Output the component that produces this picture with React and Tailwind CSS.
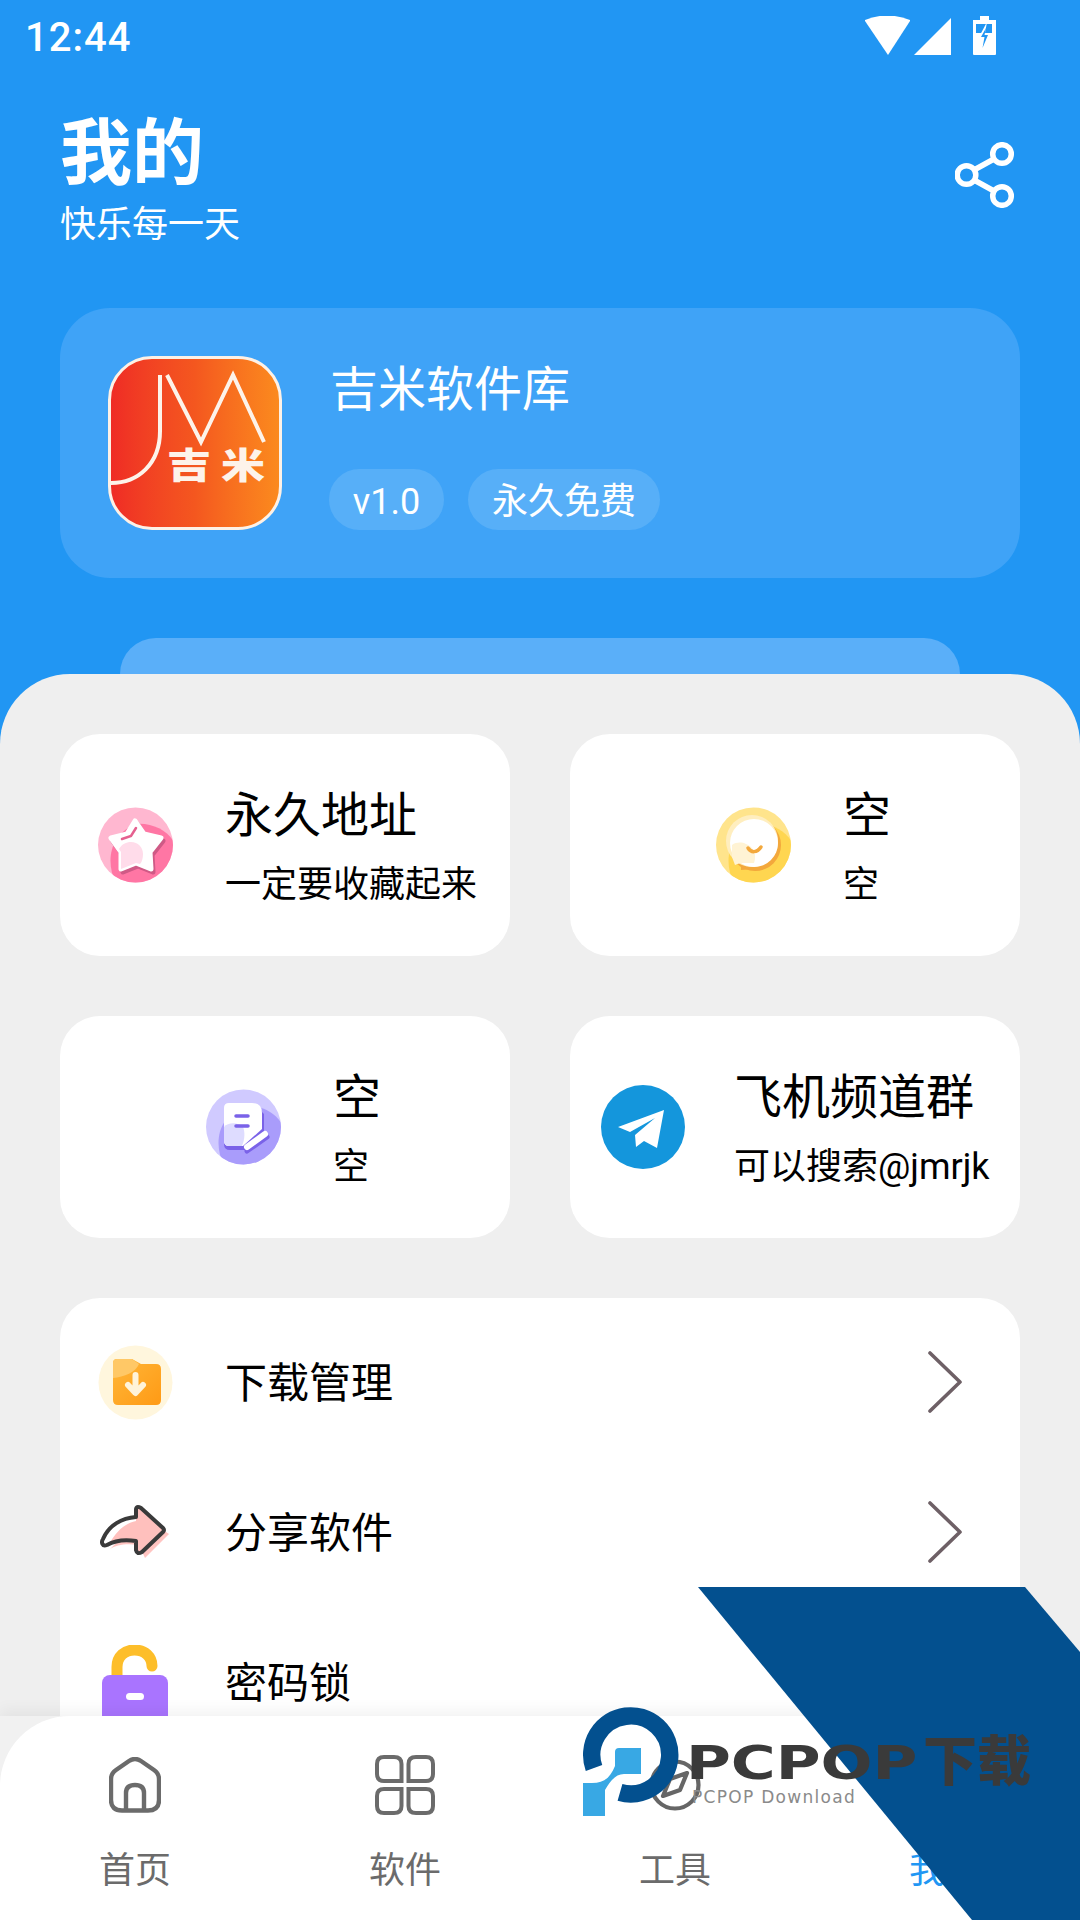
import { useState } from "react";

const gridCards = [
  { title: "永久地址", sub: "一定要收藏起来", icon: "star", pad: "pl-[38px]" },
  { title: "空", sub: "空", icon: "chat", pad: "pl-[146px]" },
  { title: "空", sub: "空", icon: "note", pad: "pl-[146px]" },
  { title: "飞机频道群", sub: "可以搜索@jmrjk", icon: "plane", pad: "pl-[31px]" },
];

const listRows = [
  { title: "下载管理", icon: "folder", arrow: true },
  { title: "分享软件", icon: "share", arrow: true },
  { title: "密码锁", icon: "lock", arrow: false },
];

const navItems = [
  { label: "首页", icon: "home" },
  { label: "软件", icon: "grid" },
  { label: "工具", icon: "compass" },
  { label: "我的", icon: "none", active: true },
];

function StatusIcons() {
  return (
    <svg width="132" height="40" viewBox="0 0 132 40" fill="#fff">
      <path d="M0 4 Q22 -5 45 4 L45 5 L23 39 L0 5Z" />
      <path d="M49 39 L86 2 V39Z" />
      <path d="M115 0 H124 V4 H131 V38 Q131 39 130 39 H109 Q108 39 108 38 V4 H115Z" />
      <path d="M111 8 H127 V17 H111Z" fill="#2196f3" />
      <path d="M122 6 L114 21 H118 L116 36 L125 17 H120 L122 6Z" fill="#fff" />
      <path d="M121 12 L116 21 H119.5 L117.5 32 L123 19 H119.5Z" fill="#2196f3" />
    </svg>
  );
}

function ShareIcon() {
  return (
    <svg width="60" height="66" viewBox="0 0 60 66" fill="none" stroke="#fff" strokeWidth="5.5">
      <path d="M19 28 L39 17 M19 38 L39 49" />
      <circle cx="47" cy="12" r="9.3" />
      <circle cx="11.5" cy="33" r="9.3" />
      <circle cx="47" cy="54" r="9.3" />
    </svg>
  );
}

function Logo() {
  return (
    <div className="relative h-[174px] w-[174px] shrink-0 overflow-hidden rounded-[44px] border-[3px] border-[#fdf1e6] bg-gradient-to-r from-[#ef2b25] via-[#f4571f] to-[#fb8a1e]">
      <svg className="absolute left-[-3px] top-[-3px]" width="174" height="174" viewBox="0 0 174 174" fill="none" stroke="#fdf3ea" strokeWidth="4">
        <path d="M52 19 V75 C52 108 30 127 3 127" />
        <path d="M59 19 L93 86 L125 19 L156 86" />
      </svg>
      <span className="absolute left-[56px] top-[86px] scale-y-[0.82] text-[44px] font-black leading-[44px] tracking-[10px] text-[#fdf3ea]">吉米</span>
    </div>
  );
}

function CardIcon({ name }) {
  if (name === "star")
    return (
      <svg width="75" height="76" viewBox="0 0 75 76" className="shrink-0">
        <defs>
          <clipPath id="star-c"><circle cx="37.5" cy="38" r="37.5" /></clipPath>
        </defs>
        <circle cx="37.5" cy="38" r="37.5" fill="#ffb7d0" />
        <path d="M37.5 17 C60 15 80 30 80 50 L70 80 H20 C8 60 8 30 37.5 17Z" fill="#ff76a4" clipPath="url(#star-c)" />
        <path d="M37 14 L46 27 L63 31 L52 45 L53 62 L38 56 L23 62 L23 45 L13 31 L29 27Z" fill="#cf5a86" stroke="#cf5a86" strokeWidth="5" strokeLinejoin="round" transform="translate(2 3)" />
        <path d="M37 14 L46 27 L63 31 L52 45 L53 62 L38 56 L23 62 L23 45 L13 31 L29 27Z" fill="#fff" stroke="#fff" strokeWidth="5" strokeLinejoin="round" />
        <path d="M21 42 C24 37 28 35 33 35 C40 35 45 40 45 47 C45 51 44 55 42 57 L38 56 L23 62 L23 45Z" fill="#ffdcea" />
        <path d="M24 32 L33 29 L38 21" fill="none" stroke="#e5608f" strokeWidth="2.5" strokeLinecap="round" />
      </svg>
    );
  if (name === "chat")
    return (
      <svg width="75" height="76" viewBox="0 0 75 76" className="shrink-0">
        <defs>
          <clipPath id="chat-c"><circle cx="37.5" cy="38" r="37.5" /></clipPath>
        </defs>
        <circle cx="37.5" cy="38" r="37.5" fill="#ffe48c" />
        <path d="M38 17 C60 15 80 30 80 50 L70 80 H20 C8 60 8 30 38 17Z" fill="#ffd650" clipPath="url(#chat-c)" />
        <circle cx="39" cy="38" r="26" fill="#f3a83c" />
        <path d="M25 58 L34 60 L38 62 L25 63Z" fill="#f3a83c" />
        <circle cx="36" cy="34" r="26" fill="#ffeebf" />
        <circle cx="38" cy="36" r="24" fill="#fff" />
        <path d="M16 38 C20 35 26 35 30 37 C38 40 41 48 38 56 L24 56 L19 58 L16 50Z" fill="#fff3d4" />
        <path d="M32 41 C35 46 41 46 45 40" fill="none" stroke="#f3a83c" strokeWidth="3.5" strokeLinecap="round" />
      </svg>
    );
  if (name === "note")
    return (
      <svg width="75" height="76" viewBox="0 0 75 76" className="shrink-0">
        <defs>
          <clipPath id="note-c"><circle cx="37.5" cy="38" r="37.5" /></clipPath>
        </defs>
        <circle cx="37.5" cy="38" r="37.5" fill="#d0caff" />
        <path d="M38 17 C60 15 80 30 80 50 L70 80 H20 C8 60 8 30 38 17Z" fill="#a99cfb" clipPath="url(#note-c)" />
        <path d="M24 17 H50 L58 25 V50 L39 61 H24 Q18 61 18 55 V23 Q18 17 24 17Z" fill="#7a62e8" />
        <path d="M23 14 H46 Q56 14 56 24 V40 L37 57 H23 Q18 57 18 52 V19 Q18 14 23 14Z" fill="#fff" />
        <path d="M18 38 C22 33 32 33 37 38 C39 42 39 50 36 57 H23 Q18 57 18 52Z" fill="#dedcff" />
        <path d="M30 27 H42 M30 37 H42" stroke="#7a62e8" strokeWidth="3.5" strokeLinecap="round" />
        <path d="M41 62 L61 48" stroke="#7a62e8" strokeWidth="5" strokeLinecap="round" />
        <path d="M41 58 L59 45" stroke="#fff" strokeWidth="6" strokeLinecap="round" />
      </svg>
    );
  return (
    <svg width="84" height="84" viewBox="0 0 84 84" className="shrink-0">
      <circle cx="42" cy="42" r="42" fill="#1496dc" />
      <path d="M17 42 L63 25 L56 63 L43 56 L35 62 L34 50 L54 33 L29 47Z" fill="#fff" strokeLinejoin="round" />
    </svg>
  );
}

function RowIcon({ name }) {
  if (name === "folder")
    return (
      <svg width="75" height="75" viewBox="0 0 75 75" className="shrink-0">
        <defs>
          <linearGradient id="folder-g" x1="0" y1="0" x2="1" y2="1">
            <stop offset="0" stopColor="#ffb739" />
            <stop offset="1" stopColor="#ff9a15" />
          </linearGradient>
        </defs>
        <circle cx="37.5" cy="37.5" r="37" fill="#fff6dd" />
        <path d="M19 14 H34 L43 19 H58 Q63 19 63 24 V55 Q63 60 58 60 H20 Q15 60 15 55 V18 Q15 14 19 14Z" fill="url(#folder-g)" />
        <path d="M19 14 H34 L41 19 C38 27 26 32 15 33 V18 Q15 14 19 14Z" fill="#ffc866" />
        <path d="M37.5 30 V44 M30 40 L37.5 48 L45 40" fill="none" stroke="#fff3d9" strokeWidth="6" strokeLinecap="round" strokeLinejoin="round" />
      </svg>
    );
  if (name === "share")
    return (
      <svg width="75" height="75" viewBox="0 0 75 75" className="shrink-0">
        <path d="M41 26 V19 L71 39 L47 63 L41 50 C28 48 18 50 12 54Z" fill="#ffc4c1" />
        <path d="M38 22 V15 Q38 10 43 13 L65 33 Q67 35 65 37 L44 57 Q39 60 38 55 V46 C26 44 16 46 9 50 C4 52 3 47 5 44 C11 30 24 23 38 22Z" fill="#ffc0bd" />
        <path d="M38 22 C24 23 11 30 5 44 C3 47 4 52 9 50 L12 48 C18 36 28 28 38 26Z" fill="#fff" />
        <path d="M38 22 V15 Q38 10 43 13 L65 33 Q67 35 65 37 L44 57 Q39 60 38 55 V46 C26 44 16 46 9 50 C4 52 3 47 5 44 C11 30 24 23 38 22Z" fill="none" stroke="#3a3a3a" strokeWidth="4" strokeLinejoin="round" />
      </svg>
    );
  return (
    <svg width="75" height="75" viewBox="0 0 75 75" className="shrink-0">
      <path d="M19 32 V22 C19 11 27 5 36.5 5 C47 5 54 12 54 21" fill="none" stroke="#fdbe2a" strokeWidth="11" strokeLinecap="round" />
      <rect x="4" y="30" width="66" height="60" rx="8" fill="#a974ff" />
      <rect x="28" y="48" width="18" height="7" rx="3.5" fill="#fff" />
    </svg>
  );
}

function Chevron() {
  return (
    <svg width="34" height="62" viewBox="0 0 34 62" fill="none" stroke="#6e6066" strokeWidth="3.6" strokeLinecap="round" strokeLinejoin="round" className="ml-auto mr-[58px]">
      <path d="M2 2 L32 31 L2 60" />
    </svg>
  );
}

function NavIcon({ name }) {
  if (name === "home")
    return (
      <svg width="52" height="56" viewBox="0 0 52 56" fill="none" stroke="#6b6b6b" strokeWidth="4.4" strokeLinejoin="round">
        <path d="M20 4 Q26 0 32 4 L45 13 Q50 16.5 50 22 V43 Q50 53.5 39 53.5 H13 Q2 53.5 2 43 V22 Q2 16.5 7 13Z" />
        <path d="M17 53 V36 Q17 28 26 28 Q35 28 35 36 V53" />
      </svg>
    );
  if (name === "grid")
    return (
      <svg width="60" height="60" viewBox="0 0 60 60" fill="none" stroke="#6b6b6b" strokeWidth="4">
        <path d="M9 2 H19 Q26.5 2 26.5 9 V26 H9 Q2 26 2 19 V9 Q2 2 9 2Z" />
        <path d="M51 2 H41 Q33.5 2 33.5 9 V26 H51 Q58 26 58 19 V9 Q58 2 51 2Z" />
        <path d="M9 58 H19 Q26.5 58 26.5 51 V34 H9 Q2 34 2 41 V51 Q2 58 9 58Z" />
        <path d="M51 58 H41 Q33.5 58 33.5 51 V34 H51 Q58 34 58 41 V51 Q58 58 51 58Z" />
      </svg>
    );
  if (name === "compass")
    return (
      <svg width="52" height="52" viewBox="0 0 52 52" fill="none" stroke="#666" strokeWidth="4.2" strokeLinejoin="round">
        <circle cx="26" cy="26" r="23.5" />
        <path d="M38 14 L21 20 L14 37 L31 31Z" />
      </svg>
    );
  return <div className="h-[52px] w-[52px]" />;
}

function Watermark() {
  return (
    <div className="pointer-events-none absolute inset-0 z-20">
      <svg className="absolute left-[698px] top-[1587px]" width="382" height="333" viewBox="0 0 382 333">
        <path d="M0 0 H327 L382 65 V333 H274Z" fill="#03508f" />
      </svg>
      <svg className="absolute left-[580px] top-[1700px]" width="110" height="120" viewBox="0 0 110 120" fill="none">
        <path d="M14 68 A39 39 0 1 1 40 92.4" stroke="#03508f" strokeWidth="17.5" />
        <path d="M39 48 H61 V74 H44 C36 74 31 80 25 90 V116 H3 V83 H12 C24 83 30 78 35 66 V52 Q35 48 39 48Z" fill="#38a8e4" />
      </svg>
      <span className="absolute left-[686px] top-[1733px] origin-left scale-x-[1.33] font-['DejaVu_Sans',sans-serif] text-[46px] font-bold leading-[60px] text-[#3a3a3a]">
        PCPOP
      </span>
      <span className="absolute left-[923px] top-[1733px] text-[54px] font-black leading-[60px] text-[#3a3a3a]">下载</span>
      <span className="absolute left-[692px] top-[1787px] font-['DejaVu_Sans',sans-serif] text-[17px] leading-[20px] tracking-[1.3px] text-[#8a8a8a]">
        PCPOP Download
      </span>
    </div>
  );
}

export default function App() {
  const [activeTab] = useState("我的");

  return (
    <div className="relative flex h-[1920px] w-[1080px] flex-col overflow-hidden bg-[#2196f3] font-['Roboto','Noto_Sans_CJK_SC',sans-serif]">
      {/* status bar */}
      <div className="flex h-[70px] shrink-0 items-start justify-between pl-[25px] pr-[83px] pt-[16px]">
        <span className="text-[40px] font-medium leading-[44px] tracking-[1px] text-white">12:44</span>
        <StatusIcons />
      </div>

      {/* header */}
      <div className="flex h-[238px] shrink-0 items-start justify-between pl-[60px] pr-[65px] pt-[42px]">
        <div>
          <h1 className="text-[72px] font-bold leading-[84px] text-white">我的</h1>
          <p className="mt-[8px] text-[36px] leading-[42px] text-white">快乐每一天</p>
        </div>
        <div className="pt-[30px]">
          <ShareIcon />
        </div>
      </div>

      {/* app card */}
      <div className="mx-[60px] flex h-[270px] shrink-0 items-center rounded-[50px] bg-[#3fa3f7] pl-[48px]">
        <Logo />
        <div className="ml-[47px] flex h-[174px] flex-col justify-between">
          <div className="pl-[1px] pt-[6px] text-[48px] leading-[56px] text-white">吉米软件库</div>
          <div className="flex gap-[24px]">
            <span className="flex h-[61px] w-[115px] items-center justify-center rounded-full bg-[#57aff8] pt-[4px] text-[36px] text-white">v1.0</span>
            <span className="flex h-[61px] w-[192px] items-center justify-center rounded-full bg-[#57aff8] pt-[4px] text-[36px] text-white">永久免费</span>
          </div>
        </div>
      </div>

      <div className="mx-[120px] mt-[60px] h-[36px] shrink-0 rounded-t-[36px] bg-[#5aaff9]" />

      {/* sheet */}
      <div className="min-h-0 flex-1 overflow-hidden rounded-t-[70px] bg-[#efefef] px-[60px] pt-[60px]">
        <div className="grid grid-cols-2 gap-[60px]">
          {gridCards.map((card) => (
            <div key={card.icon} className={`flex h-[222px] items-center rounded-[40px] bg-white ${card.pad}`}>
              <CardIcon name={card.icon} />
              <div className={card.icon === "plane" ? "ml-[49px] pt-[3px]" : "ml-[52px] pt-[3px]"}>
                <div className="text-[48px] leading-[60px] text-black">{card.title}</div>
                <div className="mt-[16px] whitespace-nowrap text-[36px] leading-[46px] text-black">{card.sub}</div>
              </div>
            </div>
          ))}
        </div>

        <div className="mt-[60px] rounded-[40px] bg-white pt-[9px]">
          {listRows.map((row) => (
            <div key={row.title} className="flex h-[150px] items-center pl-[38px]">
              <RowIcon name={row.icon} />
              <span className="ml-[52px] pt-[4px] text-[42px] leading-[50px] text-black">{row.title}</span>
              {row.arrow && <Chevron />}
            </div>
          ))}
        </div>
      </div>

      {/* bottom nav */}
      <div className="relative z-10 h-[204px] shrink-0 bg-[#f1f1f1] shadow-[0_-6px_14px_rgba(0,0,0,0.05)]">
        <div className="grid h-full grid-cols-4 rounded-t-[70px] bg-white pt-[38px]">
          {navItems.map((item) => (
            <div key={item.label} className="flex flex-col items-center">
              <div className="flex h-[62px] items-center justify-center">
                <NavIcon name={item.icon} />
              </div>
              <span className={`mt-[35px] text-[36px] leading-[40px] ${item.label === activeTab ? "text-[#2196f3]" : "text-[#6b6b6b]"}`}>
                {item.label}
              </span>
            </div>
          ))}
        </div>
      </div>

      <Watermark />
    </div>
  );
}
